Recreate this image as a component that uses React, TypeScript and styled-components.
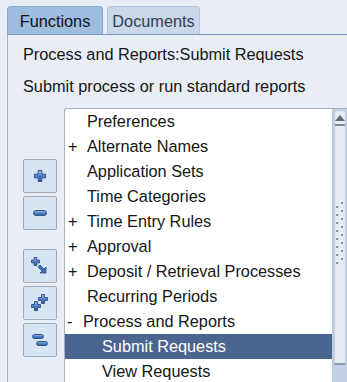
import React from 'react';
import styled, { createGlobalStyle } from 'styled-components';

const GlobalStyle = createGlobalStyle`
  html, body {
    margin: 0;
    padding: 0;
    background: #e9edf5;
    overflow: hidden;
  }
  body {
    font-family: 'Liberation Sans', Arial, sans-serif;
    color: #161616;
  }
`;

const Page = styled.div`
  width: 347px;
  height: 382px;
  padding: 6px 0 0 7px;
  box-sizing: border-box;
  overflow: hidden;
`;

const TabBar = styled.div`
  display: flex;
  gap: 4px;
  height: 28px;
  border-bottom: 1px solid #7b95ba;
`;

const Tab = styled.div<{ active?: boolean }>`
  display: flex;
  align-items: center;
  justify-content: center;
  width: ${({ active }) => (active ? '96px' : '93px')};
  height: 28px;
  box-sizing: border-box;
  border: 1px solid ${({ active }) => (active ? '#8aa8cc' : '#b6c6dc')};
  border-bottom: none;
  border-radius: 4px 4px 0 0;
  background: ${({ active }) => (active ? '#9dbddf' : '#c9d7ea')};
  color: ${({ active }) => (active ? '#121212' : '#353d4a')};
  font-size: 16.3px;
  padding-top: 2px;
`;

const Panel = styled.div`
  border-left: 1px solid #a4aebd;
  padding: 9px 0 0 15px;
  height: 360px;
`;

const Line = styled.div`
  font-size: 16.3px;
  line-height: 20px;
  margin-bottom: 12px;
  white-space: nowrap;
`;

const Body = styled.div`
  display: flex;
  gap: 7px;
  margin-top: 10px;
`;

const ButtonColumn = styled.div`
  display: flex;
  flex-direction: column;
  padding-top: 51px;
`;

const ButtonGroup = styled.div`
  display: flex;
  flex-direction: column;
  gap: 3px;
  margin-bottom: 19px;
`;

const ToolButton = styled.div`
  width: 34px;
  height: 34px;
  box-sizing: border-box;
  border: 1px solid #a1aab6;
  border-radius: 2px;
  background: #d6e4f4;
  display: flex;
  align-items: center;
  justify-content: center;
`;

const TreeBox = styled.div`
  display: flex;
  width: 283px;
  height: 290px;
  box-sizing: border-box;
  border: 1px solid #a9b1bd;
  border-right: none;
  border-radius: 3px 0 0 0;
  background: #ffffff;
  overflow: hidden;
`;

const TreeList = styled.div`
  flex: 1;
  display: flex;
  flex-direction: column;
`;

const Row = styled.div<{ selected?: boolean; pad: number }>`
  display: flex;
  align-items: center;
  height: 25px;
  flex-shrink: 0;
  padding-left: ${({ pad }) => pad}px;
  font-size: 16.3px;
  white-space: nowrap;
  background: ${({ selected }) => (selected ? '#4a6590' : 'transparent')};
  color: ${({ selected }) => (selected ? '#ffffff' : '#161616')};
`;

const Toggle = styled.span<{ w: number }>`
  display: inline-block;
  width: ${({ w }) => w}px;
  flex-shrink: 0;
`;

const ScrollBar = styled.div`
  width: 14px;
  display: flex;
  flex-direction: column;
  background: #c0d1e7;
  border-left: 1px solid #b8c6d8;
`;

const Thumb = styled.div`
  height: 255px;
  box-sizing: border-box;
  margin: 1px 1px 0 1px;
  border: 1px solid #c2ccda;
  border-bottom: 2px solid #8f9bab;
  border-radius: 4px 4px 0 0;
  background: #e6ebf4;
  display: flex;
  flex-direction: column;
  align-items: center;
`;

const ArrowCell = styled.div`
  width: 100%;
  height: 13px;
  border-bottom: 2px solid #7c879a;
  display: flex;
  align-items: center;
  justify-content: center;
`;

const Grip = styled.div`
  margin-top: 76px;
`;

type Item = { label: string; sign?: string; pad: number; tw: number; selected?: boolean };

const items: Item[] = [
  { label: 'Preferences', pad: 3, tw: 19 },
  { label: 'Alternate Names', sign: '+', pad: 3, tw: 19 },
  { label: 'Application Sets', pad: 3, tw: 19 },
  { label: 'Time Categories', pad: 3, tw: 19 },
  { label: 'Time Entry Rules', sign: '+', pad: 3, tw: 19 },
  { label: 'Approval', sign: '+', pad: 3, tw: 19 },
  { label: 'Deposit / Retrieval Processes', sign: '+', pad: 3, tw: 19 },
  { label: 'Recurring Periods', pad: 3, tw: 19 },
  { label: 'Process and Reports', sign: '-', pad: 2, tw: 16 },
  { label: 'Submit Requests', pad: 37, tw: 0, selected: true },
  { label: 'View Requests', pad: 37, tw: 0 },
];

const Defs = () => (
  <defs>
    <linearGradient id="ig" x1="0" y1="0" x2="0" y2="1">
      <stop offset="0" stopColor="#9cc0ec" />
      <stop offset="0.5" stopColor="#4f7fc4" />
      <stop offset="1" stopColor="#2d5a9c" />
    </linearGradient>
  </defs>
);

const plus = (x: number, y: number, s: number) => {
  const a = s / 3;
  return `M${x + a} ${y}h${a}v${a}h${a}v${a}h${-a}v${a}h${-a}v${-a}h${-a}v${-a}h${a}z`;
};

const PlusIcon = () => (
  <svg width="12" height="12" viewBox="0 0 12 12">
    <Defs />
    <path d={plus(0.5, 0.5, 11)} fill="url(#ig)" stroke="#34578c" strokeWidth="1" />
  </svg>
);

const MinusIcon = () => (
  <svg width="14" height="6" viewBox="0 0 14 6">
    <Defs />
    <rect x="0.5" y="0.5" width="13" height="5" rx="2.5" fill="url(#ig)" stroke="#34578c" />
  </svg>
);

const FocusIcon = () => (
  <svg width="18" height="18" viewBox="0 0 18 18">
    <Defs />
    <path d={plus(0.5, 0.5, 8)} fill="url(#ig)" stroke="#34578c" />
    <path d="M9 8 L13 12 L15 10 L15 16 L9 16 L11 14 L7 10 Z" fill="#3f6fb4" stroke="#274e8a" strokeWidth="0.8" />
  </svg>
);

const ExpandAllIcon = () => (
  <svg width="18" height="18" viewBox="0 0 18 18">
    <Defs />
    <path d={plus(0.5, 7.5, 9)} fill="url(#ig)" stroke="#34578c" />
    <path d={plus(7.5, 0.5, 9)} fill="url(#ig)" stroke="#34578c" />
  </svg>
);

const CollapseAllIcon = () => (
  <svg width="16" height="16" viewBox="0 0 16 16">
    <Defs />
    <rect x="0.5" y="2.5" width="11" height="4" rx="2" fill="url(#ig)" stroke="#34578c" />
    <rect x="4.5" y="9.5" width="11" height="4" rx="2" fill="url(#ig)" stroke="#34578c" />
  </svg>
);

const GripDots = () => (
  <svg width="10" height="70" viewBox="0 0 10 70">
    {Array.from({ length: 8 }).map((_, i) => (
      <g key={i}>
        <rect x="6" y={i * 8} width="2" height="2" fill="#7d94b8" />
        <rect x="1" y={i * 8 + 4} width="2" height="2" fill="#7d94b8" />
      </g>
    ))}
  </svg>
);

export default function App() {
  return (
    <>
      <GlobalStyle />
      <Page>
        <TabBar>
          <Tab active>Functions</Tab>
          <Tab>Documents</Tab>
        </TabBar>
        <Panel>
          <Line>Process and Reports:Submit Requests</Line>
          <Line>Submit process or run standard reports</Line>
          <Body>
            <ButtonColumn>
              <ButtonGroup>
                <ToolButton><PlusIcon /></ToolButton>
                <ToolButton><MinusIcon /></ToolButton>
              </ButtonGroup>
              <ButtonGroup>
                <ToolButton><FocusIcon /></ToolButton>
                <ToolButton><ExpandAllIcon /></ToolButton>
                <ToolButton><CollapseAllIcon /></ToolButton>
              </ButtonGroup>
            </ButtonColumn>
            <TreeBox>
              <TreeList>
                {items.map((item) => (
                  <Row key={item.label} pad={item.pad} selected={item.selected}>
                    {item.tw > 0 && <Toggle w={item.tw}>{item.sign}</Toggle>}
                    {item.label}
                  </Row>
                ))}
              </TreeList>
              <ScrollBar>
                <Thumb>
                  <ArrowCell>
                    <svg width="10" height="6" viewBox="0 0 10 6">
                      <path d="M5 0 L10 6 L0 6 Z" fill="#5c6679" />
                    </svg>
                  </ArrowCell>
                  <Grip><GripDots /></Grip>
                </Thumb>
              </ScrollBar>
            </TreeBox>
          </Body>
        </Panel>
      </Page>
    </>
  );
}
